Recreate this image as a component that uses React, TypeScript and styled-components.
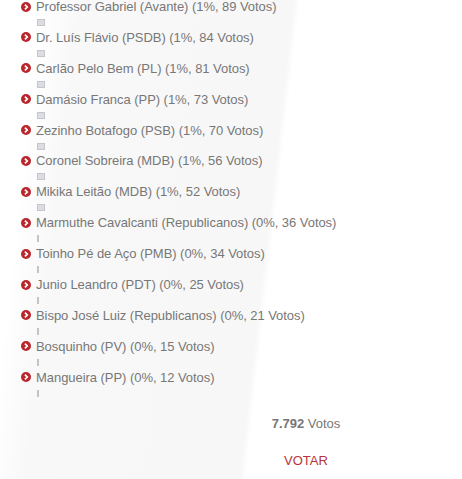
import React from "react";
import styled, { createGlobalStyle } from "styled-components";

const GlobalStyle = createGlobalStyle`
    html, body {
        margin: 0;
        padding: 0;
    }

    body {
        font-family: "Liberation Sans", Arial, sans-serif;
        font-size: 13px;
        color: #777;
        background: linear-gradient(
            96.5deg,
            #fff 40px,
            #f8f8f8 80px,
            #f7f7f7 292px,
            #fff 298px
        );
        min-height: 479px;
        overflow: hidden;
    }
`;

const RootDiv = styled.div`
    display: flex;
    flex-direction: column;
    width: 462px;
    height: 479px;
`;

const CandidateList = styled.ul`
    list-style: none;
    margin: -2px 0 0 0;
    padding: 0 0 0 21px;
`;

const CandidateItem = styled.li`
    display: flex;
    flex-direction: column;
    height: 30.9px;
`;

const NameLine = styled.div`
    display: flex;
    align-items: center;
    gap: 5px;
    height: 17px;
    line-height: 17px;
    white-space: nowrap;
    letter-spacing: -0.05px;
`;

const Bullet = styled.svg`
    flex: none;
    width: 10px;
    height: 10px;
`;

const BarTrack = styled.div`
    margin: 4px 0 0 16px;
    height: 7px;
`;

const Bar = styled.div<{ $empty?: boolean }>`
    height: 7px;
    box-sizing: border-box;
    background: ${p => (p.$empty ? "#c4c4c4" : "#dcdde3")};
    border: ${p => (p.$empty ? "none" : "1px solid #c5c6cc")};
`;

const Footer = styled.div`
    display: flex;
    flex-direction: column;
    align-items: center;
    padding-left: 150px;
    margin-top: 15px;
`;

const Total = styled.div`
    line-height: 17px;

    b {
        font-weight: bold;
    }
`;

const VoteButton = styled.button`
    margin-top: 20px;
    border: none;
    background: none;
    padding: 0;
    font: inherit;
    font-size: 13px;
    line-height: 17px;
    color: #b7343b;
    cursor: pointer;
`;

interface Candidate {
    name: string;
    percent: number;
    votes: number;
}

const CANDIDATES: Candidate[] = [
    { name: "Professor Gabriel (Avante)", percent: 1, votes: 89 },
    { name: "Dr. Luís Flávio (PSDB)", percent: 1, votes: 84 },
    { name: "Carlão Pelo Bem (PL)", percent: 1, votes: 81 },
    { name: "Damásio Franca (PP)", percent: 1, votes: 73 },
    { name: "Zezinho Botafogo (PSB)", percent: 1, votes: 70 },
    { name: "Coronel Sobreira (MDB)", percent: 1, votes: 56 },
    { name: "Mikika Leitão (MDB)", percent: 1, votes: 52 },
    { name: "Marmuthe Cavalcanti (Republicanos)", percent: 0, votes: 36 },
    { name: "Toinho Pé de Aço (PMB)", percent: 0, votes: 34 },
    { name: "Junio Leandro (PDT)", percent: 0, votes: 25 },
    { name: "Bispo José Luiz (Republicanos)", percent: 0, votes: 21 },
    { name: "Bosquinho (PV)", percent: 0, votes: 15 },
    { name: "Mangueira (PP)", percent: 0, votes: 12 },
];

function ChevronBullet() {
    return (
        <Bullet viewBox="0 0 10 10">
            <circle cx="5" cy="5" r="5" fill="#b9262c" />
            <path d="M3.9 2.6 L6.3 5 L3.9 7.4" fill="none" stroke="#fff" strokeWidth="1.7" />
        </Bullet>
    );
}

export default function App() {
    return (
        <RootDiv>
            <GlobalStyle />
            <CandidateList>
                {CANDIDATES.map(c => (
                    <CandidateItem key={c.name}>
                        <NameLine>
                            <ChevronBullet />
                            <span>
                                {c.name} ({c.percent}%, {c.votes} Votos)
                            </span>
                        </NameLine>
                        <BarTrack>
                            <Bar
                                $empty={c.percent === 0}
                                style={{ width: c.percent === 0 ? 2 : 8 * c.percent }}
                            />
                        </BarTrack>
                    </CandidateItem>
                ))}
            </CandidateList>
            <Footer>
                <Total>
                    <b>7.792</b> Votos
                </Total>
                <VoteButton>VOTAR</VoteButton>
            </Footer>
        </RootDiv>
    );
}
